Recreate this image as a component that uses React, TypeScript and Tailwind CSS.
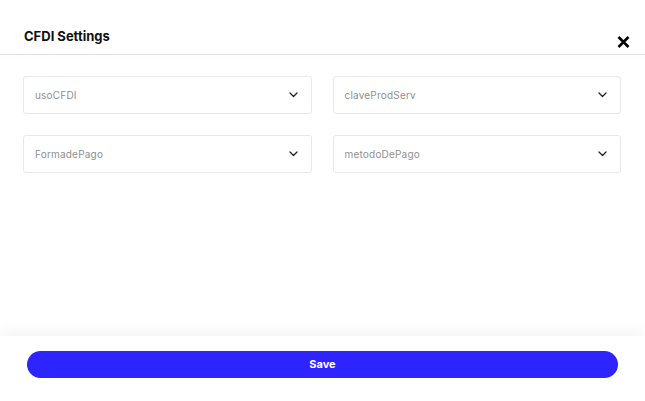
import React from "react";

const Chevron = () => (
  <svg width="9" height="6" viewBox="0 0 9 6" fill="none">
    <path d="M1 1l3.5 3.5L8 1" stroke="#222" strokeWidth="1.3" strokeLinecap="round" strokeLinejoin="round" />
  </svg>
);

const Select = ({ label }: { label: string }) => (
  <div className="h-[38px] rounded-[3px] border border-[#e6e8ea] bg-white flex items-center justify-between pl-[11px] pr-[13px]">
    <span className="text-[10px] text-[#8f8f8f] tracking-[0.2px]" style={{ fontFamily: "Inter, 'Liberation Sans', sans-serif" }}>{label}</span>
    <Chevron />
  </div>
);

export default function App() {
  return (
    <div className="w-[645px] h-[401px] bg-white flex flex-col overflow-hidden" style={{ fontFamily: "Inter, 'Liberation Sans', sans-serif" }}>
      <div className="h-[55px] border-b border-[#dfe3e7] flex justify-between pl-[24px] pr-[15px] shrink-0">
        <div className="pt-[27px] text-[13px] font-bold text-[#111] leading-[18px]">CFDI Settings</div>
        <div className="pt-[36px]">
          <svg width="13" height="12" viewBox="0 0 13 12">
            <path d="M1.5 1l10 10M11.5 1l-10 10" stroke="#000" strokeWidth="2.6" />
          </svg>
        </div>
      </div>
      <div className="grid grid-cols-2 gap-x-[21px] gap-y-[21px] pl-[23px] pr-[24px] pt-[21px]">
        <Select label="usoCFDI" />
        <Select label="claveProdServ" />
        <Select label="FormadePago" />
        <Select label="metodoDePago" />
      </div>
      <div className="mt-auto h-[65px] bg-white shadow-[0_-6px_12px_rgba(0,0,0,0.04)] pt-[14px] px-[27px] shrink-0">
        <button className="w-full h-[27px] rounded-full bg-[#2d24ff] text-white text-[11px] font-bold">Save</button>
      </div>
    </div>
  );
}
